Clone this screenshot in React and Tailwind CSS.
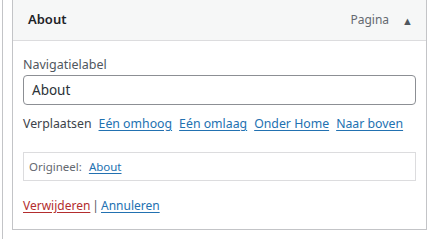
import React from "react";

const font = { fontFamily: '"Noto Sans", "Open Sans", sans-serif' };

export default function App() {
  return (
    <div className="w-[432px] h-[239px] bg-white flex overflow-hidden" style={font}>
      <div className="ml-[2px] border-l border-[#c3c4c7] flex-1 pl-[9px] pr-[6px]">
        <div className="border-x border-b border-[#c3c4c7] bg-white">
          {/* Header */}
          <div className="h-[41px] bg-[#f6f7f7] border-b border-[#dcdcde] flex items-center pl-[15px] pr-[13px]">
            <span className="text-[13px] font-semibold text-[#1d2327] flex-1">About</span>
            <span className="text-[12px] text-[#646970] mr-[13px]">Pagina</span>
            <span className="text-[#50575e] text-[11px] leading-none">▲</span>
          </div>

          {/* Body */}
          <div className="px-[10px] pt-[15px] pb-[14px] whitespace-nowrap">
            <label className="block text-[12.5px] text-[#50575e] leading-[18px]">Navigatielabel</label>
            <div className="mt-[1px] h-[30px] w-[393px] border border-[#8c8f94] rounded-[4px] flex items-center px-[8px] text-[13.5px] text-[#2c3338]">
              About
            </div>

            <div className="mt-[10px] flex items-center gap-[7px] text-[12.3px] leading-[18px]">
              <span className="text-[#3c434a]">Verplaatsen</span>
              <a className="text-[#2271b1] underline underline-offset-2">Eén omhoog</a>
              <a className="text-[#2271b1] underline underline-offset-2">Eén omlaag</a>
              <a className="text-[#2271b1] underline underline-offset-2">Onder Home</a>
              <a className="text-[#2271b1] underline underline-offset-2">Naar boven</a>
            </div>

            <div className="mt-[19px] w-[393px] h-[29px] border border-[#dcdcde] flex items-center px-[5px] text-[11.5px]">
              <span className="text-[#646970]">Origineel:</span>
              <a className="ml-[7px] text-[#2271b1] underline underline-offset-2">About</a>
            </div>

            <div className="mt-[16px] text-[12px] leading-[18px]">
              <a className="text-[#b32d2e] underline underline-offset-2">Verwijderen</a>
              <span className="text-[#50575e] mx-[2px]">|</span>
              <a className="text-[#2271b1] underline underline-offset-2">Annuleren</a>
            </div>
          </div>
        </div>
      </div>
    </div>
  );
}
